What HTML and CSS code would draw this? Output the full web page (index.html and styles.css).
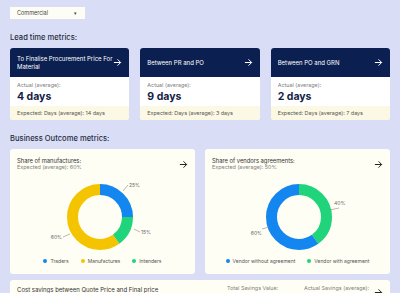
FILE: index.html
```html
<html>
<head>
<meta charset="utf-8">
<meta name="viewport" content="width=device-width, initial-scale=1">
<title>Procurement metrics</title>
<link rel="stylesheet" href="styles.css">
</head>
<body>
<div class="select"><span>Commercial</span><span class="caret">&#9662;</span></div>

<h2 class="section lead-title">Lead time metrics:</h2>
<div class="lead-row">
  <div class="lead-card">
    <div class="lead-head"><span>To Finalise Procurement Price For Material</span>
      <svg class="arrow light" viewBox="0 0 10 10"><path d="M1 5h7.5M5 1.5 8.5 5 5 8.5"/></svg></div>
    <div class="lead-body"><div class="muted">Actual (average):</div><div class="big">4 days</div></div>
    <div class="lead-foot">Expected: Days (average): 14 days</div>
  </div>
  <div class="lead-card">
    <div class="lead-head"><span>Between PR and PO</span>
      <svg class="arrow light" viewBox="0 0 10 10"><path d="M1 5h7.5M5 1.5 8.5 5 5 8.5"/></svg></div>
    <div class="lead-body"><div class="muted">Actual (average):</div><div class="big">9 days</div></div>
    <div class="lead-foot">Expected: Days (average): 3 days</div>
  </div>
  <div class="lead-card">
    <div class="lead-head"><span>Between PO and GRN</span>
      <svg class="arrow light" viewBox="0 0 10 10"><path d="M1 5h7.5M5 1.5 8.5 5 5 8.5"/></svg></div>
    <div class="lead-body"><div class="muted">Actual (average):</div><div class="big">2 days</div></div>
    <div class="lead-foot">Expected: Days (average): 7 days</div>
  </div>
</div>

<h2 class="section">Business Outcome metrics:</h2>
<div class="chart-row">
  <div class="chart-card">
    <div class="chart-head">
      <div><div class="chart-title">Share of manufactures:</div><div class="muted">Expected (average): 60%</div></div>
      <svg class="arrow" viewBox="0 0 10 10"><path d="M1 5h7.5M5 1.5 8.5 5 5 8.5"/></svg>
    </div>
    <svg class="donut" viewBox="0 0 185 82">
      <g transform="rotate(-90 90 44)">
        <circle cx="90" cy="44" r="27.5" stroke="#1486f0" stroke-dasharray="43.2 172.8" stroke-dashoffset="0"/>
        <circle cx="90" cy="44" r="27.5" stroke="#1fd47a" stroke-dasharray="25.92 172.8" stroke-dashoffset="-43.2"/>
        <circle cx="90" cy="44" r="27.5" stroke="#f5c400" stroke-dasharray="103.68 172.8" stroke-dashoffset="-69.12"/>
      </g>
      <path class="lead-line" d="M113 18 118 12M124 56 130 59M53 64 60 61"/>
      <text x="119" y="14">25%</text>
      <text x="131" y="61">15%</text>
      <text x="52" y="66" text-anchor="end">60%</text>
    </svg>
    <div class="legend">
      <span><i class="dot blue"></i>Traders</span>
      <span><i class="dot yellow"></i>Manufactures</span>
      <span><i class="dot green"></i>Intenders</span>
    </div>
  </div>
  <div class="chart-card">
    <div class="chart-head">
      <div><div class="chart-title">Share of vendors agreements:</div><div class="muted">Expected (average): 50%</div></div>
      <svg class="arrow" viewBox="0 0 10 10"><path d="M1 5h7.5M5 1.5 8.5 5 5 8.5"/></svg>
    </div>
    <svg class="donut" viewBox="0 0 185 82">
      <g transform="rotate(-90 94 44)">
        <circle cx="94" cy="44" r="27.5" stroke="#1fd47a" stroke-dasharray="69.12 172.8" stroke-dashoffset="0"/>
        <circle cx="94" cy="44" r="27.5" stroke="#1486f0" stroke-dasharray="103.68 172.8" stroke-dashoffset="-69.12"/>
      </g>
      <path class="lead-line" d="M125 37 134 35M57 56 64 54"/>
      <text x="129" y="32">40%</text>
      <text x="57" y="62" text-anchor="end">60%</text>
    </svg>
    <div class="legend">
      <span><i class="dot blue"></i>Vendor without agreement</span>
      <span><i class="dot green"></i>Vendor with agreement</span>
    </div>
  </div>
</div>

<div class="savings-card">
  <div class="savings-title">Cost savings between Quote Price and Final price</div>
  <div class="savings-col one muted">Total Savings Value:</div>
  <div class="savings-col two muted">Actual Savings (average):</div>
  <svg class="arrow" viewBox="0 0 10 10"><path d="M1 5h7.5M5 1.5 8.5 5 5 8.5"/></svg>
</div>
</body>
</html>
```

FILE: styles.css
```css
body {
  margin: 0;
  padding: 7px 10px 0;
  background: #d9def6;
  font-family: Inter, "Liberation Sans", sans-serif;
  color: #23283a;
  height: 293px;
  box-sizing: border-box;
  overflow: hidden;
}
.select {
  display: flex;
  align-items: center;
  justify-content: space-between;
  width: 75px;
  height: 12px;
  box-sizing: border-box;
  padding: 0 8px 0 7px;
  background: #fdfdf6;
  font-size: 5.5px;
  color: #444;
}
.select .caret {
  font-size: 5px;
}
.section {
  margin: 14px 0 5px;
  font-size: 7.6px;
  line-height: 10px;
  font-weight: 500;
  color: #262b3d;
}
.lead-row {
  display: flex;
  gap: 11px;
}
.lead-card {
  flex: 1;
  height: 72px;
  display: flex;
  flex-direction: column;
  border-radius: 3px;
  overflow: hidden;
  background: #ffffff;
}
.lead-head {
  height: 29px;
  flex: none;
  display: flex;
  align-items: center;
  justify-content: space-between;
  padding: 0 7px;
  background: #0b1f51;
  color: #fff;
  font-size: 6px;
  line-height: 8px;
}
.lead-head span {
  max-width: 96px;
}
.arrow {
  width: 9px;
  height: 9px;
  flex: none;
  fill: none;
  stroke: #222;
  stroke-width: 1.1;
}
.arrow.light {
  stroke: #fff;
}
.lead-body {
  flex: 1;
  padding: 5px 7px 0;
}
.muted {
  font-size: 5.4px;
  line-height: 7px;
  color: #808080;
}
.big {
  margin-top: 1px;
  font-size: 10.5px;
  line-height: 13px;
  font-weight: 700;
  color: #141d45;
}
.lead-foot {
  height: 14px;
  flex: none;
  display: flex;
  align-items: center;
  padding: 0 7px;
  background: #fbf9e4;
  font-size: 5.4px;
  color: #555;
}
.chart-row {
  display: flex;
  gap: 10px;
}
.chart-card {
  flex: 1;
  height: 125px;
  box-sizing: border-box;
  padding-top: 8px;
  background: #fffef4;
  border-radius: 3px;
}
.chart-head {
  display: flex;
  justify-content: space-between;
  align-items: center;
  padding: 0 7px;
  height: 14px;
}
.chart-title {
  font-size: 5.8px;
  line-height: 7px;
  color: #333;
}
.donut {
  display: block;
  width: 185px;
  height: 82px;
  margin-top: 2px;
}
.donut circle {
  fill: none;
  stroke-width: 11;
}
.donut text {
  font-size: 5px;
  fill: #666;
}
.lead-line {
  fill: none;
  stroke: #888;
  stroke-width: 0.6;
}
.legend {
  display: flex;
  justify-content: center;
  gap: 12px;
  font-size: 5px;
  line-height: 8px;
  color: #555;
  margin-top: 2px;
}
.legend span {
  display: flex;
  align-items: center;
}
.dot {
  width: 4px;
  height: 4px;
  border-radius: 50%;
  margin-right: 3px;
}
.blue { background: #1486f0; }
.yellow { background: #f5c400; }
.green { background: #1fd47a; }
.savings-card {
  margin-top: 6px;
  height: 20px;
  display: flex;
  align-items: flex-start;
  padding: 5px 7px 0;
  background: #fffef4;
  border-radius: 3px 3px 0 0;
}
.savings-title {
  flex: 1;
  font-size: 6px;
  line-height: 7px;
  color: #333;
  padding-top: 1px;
}
.savings-col.one {
  width: 77px;
}
.savings-col.two {
  width: 70px;
}
.savings-card .arrow {
  margin-top: 3px;
}
```
